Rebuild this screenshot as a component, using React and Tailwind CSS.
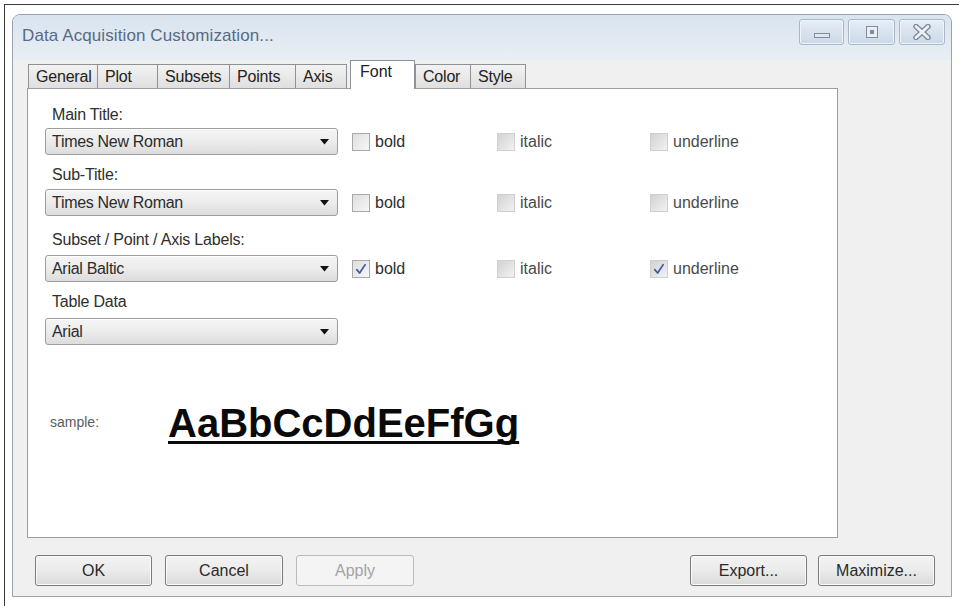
import React from "react";

const FONT = "font-['Liberation_Sans',Arial,sans-serif]";

function Select({ value }) {
  return (
    <div className="ml-[17px] w-[293px] h-[27px] rounded-[3px] border border-[#9d9d9d] bg-gradient-to-b from-[#f5f5f5] via-[#ececec] to-[#dcdcdc] flex items-center pl-[6px] pr-[8px] shadow-[inset_0_1px_0_#ffffff]">
      <span className="flex-1 text-[16px] leading-[20px] text-[#2c2c2c] tracking-[-0.3px]">{value}</span>
      <svg width="9" height="6" viewBox="0 0 9 6">
        <path d="M0 0 H9 L4.5 5.5 Z" fill="#111" />
      </svg>
    </div>
  );
}

function Check({ checked, soft, label, width }) {
  return (
    <div className="flex items-center" style={{ width }}>
      <div
        className={
          soft
            ? "w-[18px] h-[18px] border border-[#cfcfcf] bg-gradient-to-br from-[#d2d2d2] to-[#f2f2f2] flex items-center justify-center"
            : "w-[18px] h-[18px] border border-[#a9a9a9] bg-gradient-to-br from-[#dedede] to-[#f7f7f7] flex items-center justify-center"
        }
      >
        {checked && (
          <svg width="12" height="12" viewBox="0 0 12 12">
            <path d="M1.8 6.6 L4.6 10 L10.2 1.6" fill="none" stroke="#3d5b9c" strokeWidth="1.7" strokeLinecap="round" strokeLinejoin="round" />
          </svg>
        )}
      </div>
      <span className={"ml-[5px] text-[16px] leading-[20px] " + (soft ? "text-[#4a4a4a]" : "text-[#2e2e2e]")}>{label}</span>
    </div>
  );
}

function Row({ value, bold, underline }) {
  return (
    <div className="flex items-center">
      <Select value={value} />
      <div className="ml-[14px] flex items-center">
        <Check label="bold" checked={bold} width={145} />
        <Check label="italic" soft width={153} />
        <Check label="underline" soft checked={underline} width={120} />
      </div>
    </div>
  );
}

function Label({ children, mt }) {
  return (
    <div className={"ml-[24px] h-[20px] text-[16px] leading-[20px] text-[#2e2e2e] tracking-[-0.2px] " + mt}>{children}</div>
  );
}

function Btn({ children, w, disabled }) {
  return (
    <div
      className={
        disabled
          ? "h-[31px] rounded-[3px] border border-[#b9bcbf] bg-[#f4f4f4] flex items-center justify-center text-[16px] text-[#a3a3a3]"
          : "h-[31px] rounded-[3px] border border-[#777a7e] bg-gradient-to-b from-[#f3f3f3] via-[#ebebeb] to-[#d9d9d9] flex items-center justify-center text-[16px] text-[#2a2a2a] shadow-[inset_0_0_0_1px_#fbfbfb]"
      }
      style={{ width: w }}
    >
      {children}
    </div>
  );
}

function Tab({ label, w, selected, right }) {
  if (selected) {
    return (
      <div
        className="relative z-10 -mb-px ml-[3px] h-[29px] bg-white border-t border-l border-r border-[#8e9196] pl-[9px] pt-[1px] text-[16px] leading-[20px] text-[#222]"
        style={{ width: w }}
      >
        {label}
      </div>
    );
  }
  return (
    <div
      className={
        "h-[24px] border-t border-l border-[#8e9196] bg-gradient-to-b from-[#f3f3f3] to-[#dfdfdf] pl-[7px] flex items-center text-[16px] leading-[20px] text-[#222] tracking-[-0.2px]" +
        (right ? " border-r" : "")
      }
      style={{ width: w }}
    >
      {label}
    </div>
  );
}

function CaptionBtn({ w, children }) {
  return (
    <div
      className="h-[26px] rounded-[3px] border border-[#a9b8c9] bg-gradient-to-b from-[#e6eef7] to-[#cbd8e7] flex items-center justify-center shadow-[inset_0_0_0_1px_#eef4fa]"
      style={{ width: w }}
    >
      {children}
    </div>
  );
}

export default function App() {
  return (
    <div className={"w-[959px] h-[606px] bg-white overflow-hidden pt-[4px] pl-[4px] " + FONT}>
      <div className="h-[610px] border-t border-l border-[#3c3c3c] pt-[9px] pl-[7px]">
        <div className="w-[940px] h-[583px] rounded-t-[8px] border border-[#98a3ae] bg-[#f0f0f0] flex flex-col overflow-hidden">
          {/* title bar */}
          <div className="h-[45px] flex items-start bg-gradient-to-b from-[#d9e4ef] to-[#e9eef4]">
            <div className="ml-[9px] mt-[11px] text-[17px] leading-[20px] text-[#566b85] tracking-[0.1px]">
              Data Acquisition Customization...
            </div>
            <div className="ml-auto mr-[6px] mt-[4px] flex gap-[4px]">
              <CaptionBtn w={45}>
                <svg width="18" height="14" viewBox="0 0 18 14">
                  <rect x="1.5" y="8.5" width="15" height="4" fill="#dfe6ee" stroke="#7f8c9b" />
                </svg>
              </CaptionBtn>
              <CaptionBtn w={47}>
                <svg width="14" height="14" viewBox="0 0 14 14">
                  <rect x="1.5" y="1.5" width="11" height="11" fill="#e9eef4" stroke="#7f8c9b" />
                  <rect x="5" y="5" width="4" height="4" fill="#7f8c9b" />
                </svg>
              </CaptionBtn>
              <CaptionBtn w={46}>
                <svg width="20" height="16" viewBox="0 0 20 16">
                  <path d="M4 2.5 L16 13.5 M16 2.5 L4 13.5" stroke="#7d8a99" strokeWidth="5.5" strokeLinecap="round" />
                  <path d="M4 2.5 L16 13.5 M16 2.5 L4 13.5" stroke="#eef2f6" strokeWidth="2.8" strokeLinecap="round" />
                </svg>
              </CaptionBtn>
            </div>
          </div>

          {/* tabs */}
          <div className="h-[28px] ml-[15px] flex items-end">
            <Tab label="General" w={69} />
            <Tab label="Plot" w={60} />
            <Tab label="Subsets" w={72} />
            <Tab label="Points" w={66} />
            <Tab label="Axis" w={52} right />
            <Tab label="Font" w={65} selected />
            <Tab label="Color" w={55} />
            <Tab label="Style" w={56} right />
          </div>

          {/* panel */}
          <div className="ml-[14px] w-[811px] h-[450px] border border-[#9a9da2] bg-white flex flex-col">
            <Label mt="mt-[16px]">Main Title:</Label>
            <div className="mt-[3px]">
              <Row value="Times New Roman" />
            </div>
            <Label mt="mt-[10px]">Sub-Title:</Label>
            <div className="mt-[4px]">
              <Row value="Times New Roman" />
            </div>
            <Label mt="mt-[14px]">Subset / Point / Axis Labels:</Label>
            <div className="mt-[5px]">
              <Row value="Arial Baltic" bold underline />
            </div>
            <Label mt="mt-[10px]">Table Data</Label>
            <div className="mt-[6px] flex">
              <Select value="Arial" />
            </div>
            <div className="mt-[58px] flex items-start">
              <div className="ml-[22px] mt-[10px] w-[118px] text-[14px] leading-[18px] text-[#5c5c5c]">sample:</div>
              <div className="text-[40px] leading-[40px] font-bold text-[#0a0a0a] underline decoration-[3px] underline-offset-[4px] [text-decoration-skip-ink:none]">
                AaBbCcDdEeFfGg
              </div>
            </div>
          </div>

          {/* buttons */}
          <div className="mt-[17px] ml-[22px] mr-[16px] flex">
            <div className="flex gap-[13px]">
              <Btn w={117}>OK</Btn>
              <Btn w={118}>Cancel</Btn>
              <Btn w={118} disabled>Apply</Btn>
            </div>
            <div className="ml-auto flex gap-[11px]">
              <Btn w={117}>Export...</Btn>
              <Btn w={117}>Maximize...</Btn>
            </div>
          </div>
        </div>
      </div>
    </div>
  );
}
